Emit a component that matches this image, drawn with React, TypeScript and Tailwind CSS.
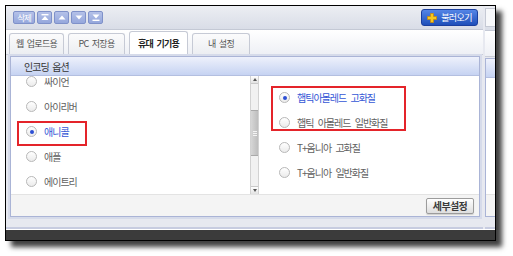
import React from 'react';

const FONT = "font-['Noto_Sans_CJK_KR','Noto_Sans',sans-serif]";

const leftItems = ['싸이언', '아이리버', '애니콜', '애플', '에이트리'];
const rightItems = ['햅틱아몰레드 고화질', '햅틱 아몰레드 일반화질', 'T+옴니아 고화질', 'T+옴니아 일반화질'];

const Radio = ({ checked }: { checked?: boolean }) => (
  <span className="w-[11px] h-[11px] rounded-full border border-[#b8b8b8] bg-linear-to-b from-white to-[#ebebeb] flex items-center justify-center shrink-0">
    {checked && <span className="w-[4px] h-[4px] rounded-full bg-[#2c4fd4]" />}
  </span>
);

// small move buttons in the toolbar
const ArrowIcon = ({ kind }: { kind: 'top' | 'up' | 'down' | 'bottom' }) => (
  <svg width="8" height="7" viewBox="0 0 8 7">
    {kind === 'top' && (
      <>
        <rect x="0.5" y="0" width="7" height="1.4" fill="#fff" />
        <path d="M4 2 L7.5 6 L0.5 6 Z" fill="#fff" />
      </>
    )}
    {kind === 'up' && <path d="M4 1.5 L7.5 5.5 L0.5 5.5 Z" fill="#fff" />}
    {kind === 'down' && <path d="M0.5 1.5 L7.5 1.5 L4 5.5 Z" fill="#fff" />}
    {kind === 'bottom' && (
      <>
        <path d="M0.5 0.5 L7.5 0.5 L4 4.5 Z" fill="#fff" />
        <rect x="0.5" y="5.6" width="7" height="1.4" fill="#fff" />
      </>
    )}
  </svg>
);

const PlusIcon = () => (
  <svg width="10" height="10" viewBox="0 0 10 10">
    <path d="M3.5 0.5 H6.5 V3.5 H9.5 V6.5 H6.5 V9.5 H3.5 V6.5 H0.5 V3.5 H3.5 Z" fill="#f7c81e" stroke="#c98a0c" strokeWidth="0.8" />
  </svg>
);

const tabs = [
  { label: '웹 업로드용', w: 'w-[55px]' },
  { label: 'PC 저장용', w: 'w-[57px]' },
  { label: '휴대 기기용', w: 'w-[59px]', active: true },
  { label: '내 설정', w: 'w-[58px]' },
];

export default function App() {
  return (
    <div className={`w-[513px] h-[256px] bg-white pt-[5px] pl-[5px] ${FONT}`}>
      <div className="w-[491px] h-[236px] border border-black flex flex-col bg-[#e7e9f0] shadow-[6px_6px_5px_rgba(0,0,0,0.75)]">
        <div className="flex h-[223px]">
          {/* main column */}
          <div className="w-[477px] flex flex-col">
            {/* toolbar */}
            <div className="h-[25px] flex items-center pl-[7px] pr-[5px] gap-[2px] bg-linear-to-b from-[#eceef3] to-[#d9dde7] border-b border-[#c4c9d5]">
              <button className="h-[13px] w-[22px] flex items-center justify-center rounded-[2px] border border-[#7f91c9] bg-linear-to-b from-[#b4c1e8] to-[#95a7dc] text-white text-[8.5px] tracking-[-1px] leading-none">
                삭제
              </button>
              {(['top', 'up', 'down', 'bottom'] as const).map((k) => (
                <button
                  key={k}
                  className="h-[13px] w-[15px] flex items-center justify-center rounded-[2px] border border-[#7f91c9] bg-linear-to-b from-[#b4c1e8] to-[#95a7dc]"
                >
                  <ArrowIcon kind={k} />
                </button>
              ))}
              <button className="ml-auto h-[17px] w-[57px] flex items-center justify-center gap-[4px] rounded-[3px] border border-[#1b3f9e] bg-linear-to-b from-[#5485e6] to-[#1f4fba] text-white text-[9px] tracking-[-0.6px] leading-none">
                <PlusIcon />
                불러오기
              </button>
            </div>

            {/* tabs */}
            <div className="h-[26px] flex items-end gap-[4px] pl-[3px] bg-linear-to-b from-white to-[#eef0f5] border-b border-[#c9cdd8]">
              {tabs.map((t) => (
                <div
                  key={t.label}
                  className={`${t.w} flex items-center justify-center rounded-t-[3px] border border-b-0 border-[#c6cad5] text-[9px] tracking-[-0.7px] [word-spacing:2px] ${
                    t.active
                      ? 'h-[24px] bg-white font-bold text-[#222] -mb-px'
                      : 'h-[21px] bg-linear-to-b from-[#fbfbfc] to-[#eceef2] text-[#555]'
                  }`}
                >
                  {t.label}
                </div>
              ))}
            </div>

            {/* encoding panel */}
            <div className="pt-[1px] pl-[4px] pr-[3px] pb-[10px] border-b-2 border-[#c7cce0]">
              <div className="h-[161px] flex flex-col border border-[#aab4d6] bg-white shadow-[0_0_0_2px_#d6dbea]">
                <div className="h-[19px] flex items-center pl-[13px] bg-linear-to-b from-[#eef1fb] to-[#c6d3f2] border-b border-[#b3bfe0] text-[10px] tracking-[-0.9px] [word-spacing:2px] text-[#333]">
                  인코딩 옵션
                </div>
                <div className="h-[118px] flex">
                  {/* left list (scrolled) */}
                  <div className="w-[239px] overflow-hidden">
                    <div className="-mt-[7px] pl-[15px]">
                      {leftItems.map((label, i) => (
                        <div key={label} className="relative h-[25px] flex items-center gap-[7px]">
                          <Radio checked={i === 2} />
                          <span className={`text-[10px] tracking-[-1px] ${i === 2 ? 'text-[#3557d6]' : 'text-[#5f5f5f]'}`}>
                            {label}
                          </span>
                          {i === 2 && (
                            <span className="absolute left-[-9px] top-[2px] w-[70px] h-[25px] border-2 border-[#e4242a]" />
                          )}
                        </div>
                      ))}
                    </div>
                  </div>
                  {/* scrollbar */}
                  <div className="w-[9px] flex flex-col bg-[#f1f1f1] border-x border-[#d2d2d2]">
                    <div className="h-[8px] flex items-center justify-center bg-linear-to-b from-white to-[#e2e2e2] border-b border-[#c9c9c9]">
                      <span className="w-0 h-0 border-x-[2.5px] border-x-transparent border-b-[3px] border-b-[#555]" />
                    </div>
                    <div className="h-[26px]" />
                    <div className="h-[46px] flex flex-col items-center justify-center gap-[1px] bg-linear-to-r from-[#d6d6d6] to-[#bdbdbd] border-y border-[#a9a9a9]">
                      <span className="w-[4px] h-px bg-[#f4f4f4]" />
                      <span className="w-[4px] h-px bg-[#f4f4f4]" />
                      <span className="w-[4px] h-px bg-[#f4f4f4]" />
                    </div>
                    <div className="flex-1" />
                    <div className="h-[8px] flex items-center justify-center bg-linear-to-b from-white to-[#e2e2e2] border-t border-[#c9c9c9]">
                      <span className="w-0 h-0 border-x-[2.5px] border-x-transparent border-t-[3px] border-t-[#555]" />
                    </div>
                  </div>
                  {/* right list */}
                  <div className="relative flex-1 pt-[9px] pl-[20px]">
                    {rightItems.map((label, i) => (
                      <div key={label} className="h-[25px] flex items-center gap-[7px]">
                        <Radio checked={i === 0} />
                        <span className={`text-[10px] tracking-[-1px] [word-spacing:3px] ${i === 0 ? 'text-[#3557d6]' : 'text-[#5f5f5f]'}`}>
                          {label}
                        </span>
                      </div>
                    ))}
                    <span className="absolute left-[12px] top-[10px] w-[135px] h-[45px] border-2 border-[#e4242a]" />
                  </div>
                </div>
                <div className="flex-1 flex items-center justify-end pr-[5px] bg-[#f4f4f4] border-t border-[#e3e3e3]">
                  <button className="h-[16px] w-[48px] flex items-center justify-center rounded-[2px] border border-[#9c9c9c] bg-linear-to-b from-white to-[#dedede] shadow-[0_1px_1px_rgba(0,0,0,0.15)] text-[10px] font-bold tracking-[-0.6px] text-[#3a3a3a] leading-none">
                    세부설정
                  </button>
                </div>
              </div>
            </div>
          </div>

          {/* neighbouring panel, cut off */}
          <div className="flex-1 flex flex-col pl-[2px]">
            <div className="h-[25px] pt-[2px] bg-linear-to-b from-[#eceef3] to-[#d9dde7] border-b border-[#c4c9d5]">
              <div className="h-[19px] border border-r-0 border-[#c5c9d4] bg-[#f7f8fa]" />
            </div>
            <div className="h-[26px] bg-linear-to-b from-white to-[#eef0f5] border-b border-[#c9cdd8]" />
            <div className="flex-1 pt-[1px] pb-[10px] border-b-2 border-[#c7cce0]">
              <div className="h-full border border-r-0 border-[#aab4d6] bg-white flex flex-col">
                <div className="h-[19px] bg-linear-to-b from-[#eef1fb] to-[#c6d3f2] border-b border-[#b3bfe0]" />
                <div className="flex-1" />
                <div className="h-[22px] bg-[#f4f4f4] border-t border-[#e3e3e3]" />
              </div>
            </div>
          </div>
        </div>
        <div className="flex-1 bg-[#3b3b3b] border-t border-white" />
      </div>
    </div>
  );
}
